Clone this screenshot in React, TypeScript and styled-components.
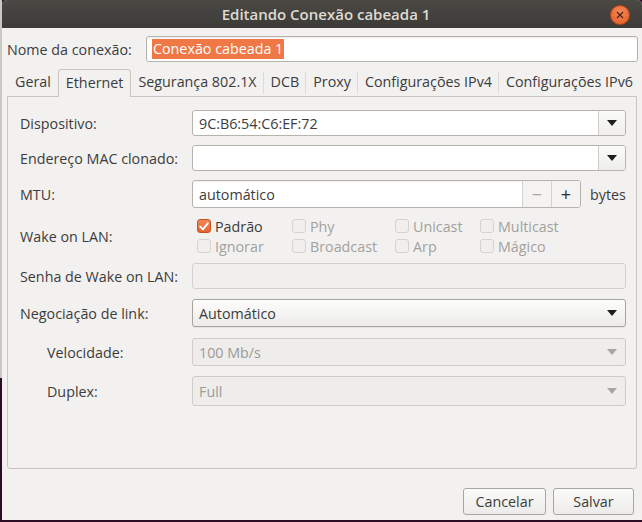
import React from "react";
import styled, { createGlobalStyle, css } from "styled-components";

const Global = createGlobalStyle`
  html, body { margin: 0; padding: 0; background: #2c0d23; }
  body { font-family: "Open Sans", "Noto Sans", sans-serif; font-size: 14.3px; color: #3c3c3c; }
  * { box-sizing: border-box; }
`;

const Screen = styled.div`
  width: 642px;
  height: 522px;
  display: flex;
  overflow: hidden;
`;

const Desktop = styled.div`
  width: 2px;
  display: flex;
  flex-direction: column;
`;

const OtherWindow = styled.div`
  height: 378px;
  background: #c9c8c5;
`;

const Wallpaper = styled.div`
  flex: 1;
  background: #2c0d23;
`;

const Window = styled.div`
  flex: 1;
  height: 520px;
  display: flex;
  flex-direction: column;
  background: #f2f1f0;
  border-radius: 5px 5px 0 0;
  overflow: hidden;
`;

const TitleBar = styled.div`
  height: 28px;
  flex: none;
  display: flex;
  align-items: center;
  justify-content: center;
  position: relative;
  background: linear-gradient(#4a4944, #3c3b37);
  color: #dfdbd2;
  font-weight: 600;
  font-size: 15px;
  padding: 0 0 1px 8px;
`;

const CloseBtn = styled.div`
  position: absolute;
  right: 12px;
  top: 5px;
  width: 20px;
  height: 20px;
  border-radius: 50%;
  background: radial-gradient(circle at 50% 35%, #f58a5c, #e2581f);
  border: 1px solid #b8441a;
  display: flex;
  align-items: center;
  justify-content: center;
`;

const NameRow = styled.div`
  display: flex;
  align-items: center;
  margin-top: 8px;
  padding: 0 4px 0 5px;
  height: 26px;
`;

const NameLabel = styled.span`
  width: 139px;
  flex: none;
`;

const TextField = styled.div<{ $disabled?: boolean }>`
  flex: 1;
  height: 100%;
  display: flex;
  align-items: center;
  padding: 0 5px;
  background: ${(p) => (p.$disabled ? "#f0efed" : "#ffffff")};
  border: 1px solid ${(p) => (p.$disabled ? "#d3d0cb" : "#b6b3ad")};
  border-radius: 3px;
  box-shadow: ${(p) => (p.$disabled ? "none" : "inset 0 1px 1px rgba(0,0,0,0.08)")};
`;

const Selected = styled.span`
  background: #f07746;
  color: #ffffff;
  padding: 0 1px;
  line-height: 20px;
`;

const TabBar = styled.div`
  display: flex;
  align-items: flex-end;
  margin-top: 5px;
  padding-left: 6px;
  height: 29px;
  position: relative;
  z-index: 1;
`;

const Tab = styled.div<{ $active?: boolean; $sep?: boolean }>`
  height: 27px;
  display: flex;
  align-items: center;
  padding: 0 7px 2px;
  white-space: nowrap;
  position: relative;
  ${(p) =>
    p.$active
      ? css`
          height: 28px;
          margin-bottom: -1px;
          background: #f2f1f0;
          border: 1px solid #c9c6c1;
          border-bottom: none;
          border-radius: 4px 4px 0 0;
          padding: 0 7px 2px;
        `
      : ""}
  ${(p) =>
    p.$sep
      ? css`
          &::after {
            content: "";
            position: absolute;
            right: 0;
            top: 3px;
            bottom: 2px;
            width: 1px;
            background: #dedcd8;
          }
        `
      : ""}
`;

const Panel = styled.div`
  margin: 0 5px 0 5px;
  height: 373px;
  border: 1px solid #c9c6c1;
  border-radius: 0 0 3px 3px;
  padding: 13px 10px 0 12px;
  display: flex;
  flex-direction: column;
`;

const Row = styled.div<{ $h: number; $mt: number }>`
  display: flex;
  align-items: center;
  height: ${(p) => p.$h}px;
  margin-top: ${(p) => p.$mt}px;
`;

const Label = styled.span<{ $indent?: boolean }>`
  width: 172px;
  flex: none;
  white-space: nowrap;
  padding-left: ${(p) => (p.$indent ? 27 : 0)}px;
`;

const Combo = styled.div<{ $variant: "entry" | "button" | "disabled" }>`
  flex: 1;
  height: 100%;
  display: flex;
  align-items: stretch;
  border-radius: 3px;
  ${(p) =>
    p.$variant === "entry"
      ? css`
          background: #ffffff;
          border: 1px solid #b6b3ad;
        `
      : p.$variant === "button"
      ? css`
          background: linear-gradient(#fdfdfc, #ecebe9);
          border: 1px solid #a7a49e;
          box-shadow: 0 1px 0 rgba(0, 0, 0, 0.05);
        `
      : css`
          background: #eeedeb;
          border: 1px solid #d0cdc8;
          color: #9c9a96;
        `}
`;

const ComboText = styled.div`
  flex: 1;
  display: flex;
  align-items: center;
  padding-left: 6px;
`;

const ArrowBox = styled.div<{ $sep?: boolean }>`
  width: 27px;
  flex: none;
  display: flex;
  align-items: center;
  justify-content: center;
  ${(p) =>
    p.$sep
      ? css`
          border-left: 1px solid #cfccc7;
          background: linear-gradient(#fbfbfa, #efeeec);
          border-radius: 0 2px 2px 0;
        `
      : ""}
`;

const Arrow = ({ color = "#1e1e1e" }: { color?: string }) => (
  <svg width="10" height="6" viewBox="0 0 10 6">
    <polygon points="0,0 10,0 5,6" fill={color} />
  </svg>
);

const Spin = styled.div`
  width: 389px;
  height: 100%;
  display: flex;
  background: #ffffff;
  border: 1px solid #b6b3ad;
  border-radius: 3px;
  box-shadow: inset 0 1px 1px rgba(0, 0, 0, 0.06);
`;

const SpinBtn = styled.div<{ $disabled?: boolean }>`
  width: 29px;
  flex: none;
  display: flex;
  align-items: center;
  justify-content: center;
  border-left: 1px solid #d5d2cd;
  background: #f4f3f1;
  font-size: 18px;
  color: ${(p) => (p.$disabled ? "#a9a7a3" : "#2e2e2e")};
  &:last-child {
    border-radius: 0 2px 2px 0;
  }
`;

const Unit = styled.span`
  margin-left: 9px;
`;

const CheckGrid = styled.div`
  display: grid;
  grid-template-columns: 95px 103px 85px auto;
  grid-template-rows: 20px 20px;
  padding-left: 5px;
  align-self: stretch;
`;

const CheckItem = styled.label<{ $disabled?: boolean }>`
  display: flex;
  align-items: center;
  gap: 4px;
  color: ${(p) => (p.$disabled ? "#a3a19d" : "#3c3c3c")};
`;

const Box = styled.span<{ $checked?: boolean }>`
  width: 14px;
  height: 14px;
  border-radius: 3px;
  display: flex;
  align-items: center;
  justify-content: center;
  ${(p) =>
    p.$checked
      ? css`
          background: linear-gradient(#f3875a, #e0642f);
          border: 1px solid #c4531f;
        `
      : css`
          background: #f0efed;
          border: 1px solid #d6d3ce;
        `}
`;

const Footer = styled.div`
  display: flex;
  justify-content: flex-end;
  gap: 7px;
  padding: 19px 8px 0 0;
`;

const Button = styled.div<{ $w: number }>`
  width: ${(p) => p.$w}px;
  height: 27px;
  display: flex;
  align-items: center;
  justify-content: center;
  padding-bottom: 1px;
  background: linear-gradient(#fbfbfa, #ecebe9);
  border: 1px solid #aaa7a1;
  border-radius: 3px;
`;

const Check = () => (
  <svg width="10" height="9" viewBox="0 0 10 9">
    <path d="M1.2 4.6 L3.9 7.3 L8.8 1.4" stroke="#fff" strokeWidth="1.9" fill="none" strokeLinecap="round" strokeLinejoin="round" />
  </svg>
);

const checks: { t: string; c?: boolean; d?: boolean }[] = [
  { t: "Padrão", c: true },
  { t: "Phy", d: true },
  { t: "Unicast", d: true },
  { t: "Multicast", d: true },
  { t: "Ignorar", d: true },
  { t: "Broadcast", d: true },
  { t: "Arp", d: true },
  { t: "Mágico", d: true },
];

const tabs = ["Geral", "Ethernet", "Segurança 802.1X", "DCB", "Proxy", "Configurações IPv4", "Configurações IPv6"];

export default function App() {
  return (
    <>
      <Global />
      <Screen>
        <Desktop>
          <OtherWindow />
          <Wallpaper />
        </Desktop>
        <Window>
          <TitleBar>
            Editando Conexão cabeada 1
            <CloseBtn>
              <svg width="8" height="8" viewBox="0 0 8 8">
                <path d="M1 1 L7 7 M7 1 L1 7" stroke="#4a2412" strokeWidth="1.3" />
              </svg>
            </CloseBtn>
          </TitleBar>
          <NameRow>
            <NameLabel>Nome da conexão:</NameLabel>
            <TextField>
              <Selected>Conexão cabeada 1</Selected>
            </TextField>
          </NameRow>
          <TabBar>
            {tabs.map((t, i) => (
              <Tab key={t} $active={i === 1} $sep={i !== 0 && i !== 1 && i !== tabs.length - 1}>
                {t}
              </Tab>
            ))}
          </TabBar>
          <Panel>
            <Row $h={26} $mt={0}>
              <Label>Dispositivo:</Label>
              <Combo $variant="entry">
                <ComboText>9C:B6:54:C6:EF:72</ComboText>
                <ArrowBox $sep>
                  <Arrow />
                </ArrowBox>
              </Combo>
            </Row>
            <Row $h={26} $mt={9}>
              <Label>Endereço MAC clonado:</Label>
              <Combo $variant="entry">
                <ComboText />
                <ArrowBox $sep>
                  <Arrow />
                </ArrowBox>
              </Combo>
            </Row>
            <Row $h={28} $mt={9}>
              <Label>MTU:</Label>
              <Spin>
                <ComboText>automático</ComboText>
                <SpinBtn $disabled>−</SpinBtn>
                <SpinBtn>+</SpinBtn>
              </Spin>
              <Unit>bytes</Unit>
            </Row>
            <Row $h={40} $mt={8}>
              <Label>Wake on LAN:</Label>
              <CheckGrid>
                {checks.map((c) => (
                  <CheckItem key={c.t} $disabled={c.d}>
                    <Box $checked={c.c}>{c.c && <Check />}</Box>
                    {c.t}
                  </CheckItem>
                ))}
              </CheckGrid>
            </Row>
            <Row $h={26} $mt={7}>
              <Label>Senha de Wake on LAN:</Label>
              <TextField $disabled />
            </Row>
            <Row $h={28} $mt={10}>
              <Label>Negociação de link:</Label>
              <Combo $variant="button">
                <ComboText>Automático</ComboText>
                <ArrowBox>
                  <Arrow />
                </ArrowBox>
              </Combo>
            </Row>
            <Row $h={28} $mt={11}>
              <Label $indent>Velocidade:</Label>
              <Combo $variant="disabled">
                <ComboText>100 Mb/s</ComboText>
                <ArrowBox>
                  <Arrow color="#a8a6a2" />
                </ArrowBox>
              </Combo>
            </Row>
            <Row $h={30} $mt={10}>
              <Label $indent>Duplex:</Label>
              <Combo $variant="disabled">
                <ComboText>Full</ComboText>
                <ArrowBox>
                  <Arrow color="#a8a6a2" />
                </ArrowBox>
              </Combo>
            </Row>
          </Panel>
          <Footer>
            <Button $w={83}>Cancelar</Button>
            <Button $w={81}>Salvar</Button>
          </Footer>
        </Window>
      </Screen>
    </>
  );
}
